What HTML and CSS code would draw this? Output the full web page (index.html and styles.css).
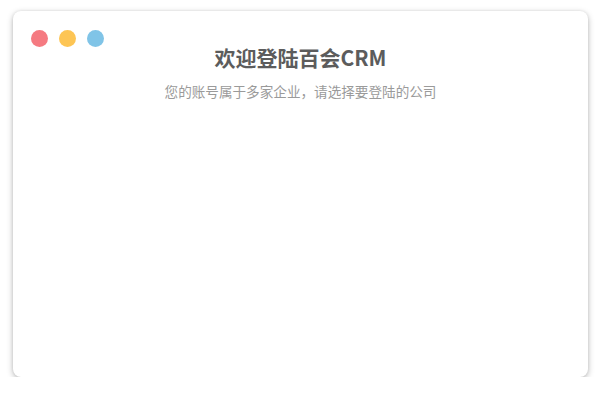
FILE: index.html
```html
<!DOCTYPE html>
<html lang="zh">
<head>
<meta charset="utf-8">
<link rel="stylesheet" href="styles.css">
</head>
<body>
<div class="window">
  <div class="dots">
    <span class="dot red"></span>
    <span class="dot yellow"></span>
    <span class="dot blue"></span>
  </div>
  <h1 class="title">欢迎登陆百会CRM</h1>
  <p class="subtitle">您的账号属于多家企业，请选择要登陆的公司</p>
</div>
</body>
</html>
```
FILE: styles.css
```css
html, body {
  margin: 0;
  padding: 0;
  background: #ffffff;
}
body {
  padding: 11px 14px 0 13px;
  font-family: "Noto Sans CJK SC", "Noto Sans", sans-serif;
}
.window {
  position: relative;
  width: 575px;
  height: 366px;
  background: #fff;
  border-radius: 8px;
  box-shadow: 0 2px 6px rgba(0,0,0,0.28), 0 0 3px rgba(0,0,0,0.07);
  box-sizing: border-box;
  padding-top: 32px;
}
.dots {
  position: absolute;
  top: 19px;
  left: 18px;
  display: flex;
  gap: 11px;
}
.dot {
  width: 17px;
  height: 17px;
  border-radius: 50%;
  display: block;
}
.red { background: #f57a81; }
.yellow { background: #fdc554; }
.blue { background: #80c4e7; }
.title {
  margin: 0;
  text-align: center;
  font-size: 21px;
  font-weight: bold;
  color: #5c5c5c;
  line-height: 28px;
}
.subtitle {
  margin: 11px 0 0;
  text-align: center;
  font-size: 13.6px;
  color: #9a9a9a;
  line-height: 18px;
}
```
